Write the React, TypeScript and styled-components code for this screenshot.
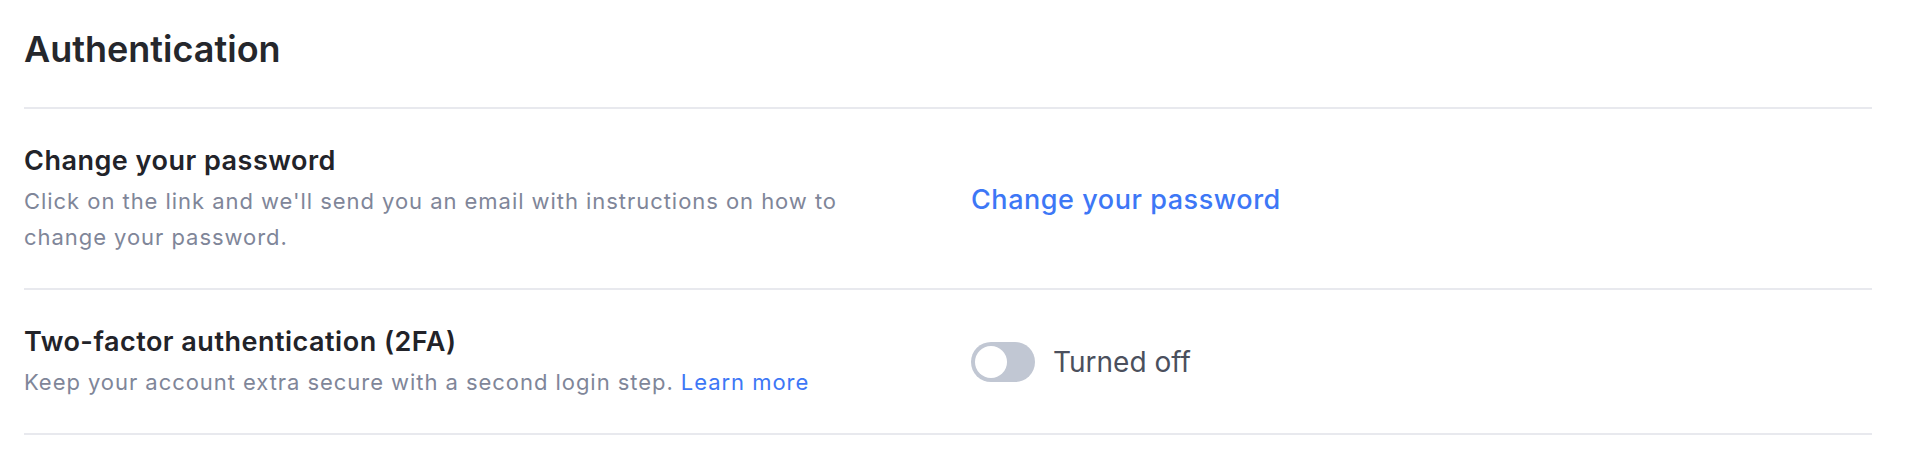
import React from 'react';
import styled, { createGlobalStyle } from 'styled-components';

const GlobalStyle = createGlobalStyle`
  body {
    margin: 0;
    background: #ffffff;
    font-family: Inter, "Noto Sans", sans-serif;
  }
`;

const Page = styled.section`
  padding: 0 36px 0 24px;
`;

const Title = styled.h1`
  margin: 0;
  padding: 27px 0 36px;
  font-size: 36px;
  line-height: 44px;
  font-weight: 600;
  color: #25272c;
  border-bottom: 2px solid #e8e9ee;
`;

const Row = styled.div`
  display: grid;
  grid-template-columns: 896px 1fr;
  column-gap: 51px;
  align-items: center;
  padding: 34px 0 33px;
  border-bottom: 2px solid #e8e9ee;
`;

const Info = styled.div`
  display: flex;
  flex-direction: column;
  gap: 4px;
`;

const Heading = styled.h2`
  margin: 0;
  font-size: 27px;
  line-height: 36px;
  font-weight: 600;
  letter-spacing: 0.5px;
  color: #222329;
`;

const Description = styled.p`
  margin: 0;
  max-width: 860px;
  font-size: 22px;
  line-height: 36px;
  letter-spacing: 0.95px;
  color: #7f8699;
`;

const Link = styled.a<{ $large?: boolean }>`
  color: #3d77f6;
  text-decoration: none;
  font-size: ${(p) => (p.$large ? '27px' : 'inherit')};
  font-weight: ${(p) => (p.$large ? 500 : 400)};
  letter-spacing: ${(p) => (p.$large ? '0.55px' : 'inherit')};
  cursor: pointer;
`;

const SwitchWrap = styled.label`
  display: flex;
  align-items: center;
  gap: 18px;
  cursor: pointer;
`;

const Track = styled.span<{ $on: boolean }>`
  position: relative;
  width: 64px;
  height: 40px;
  border-radius: 20px;
  background: ${(p) => (p.$on ? '#3d77f6' : '#c1c7d3')};
  flex-shrink: 0;
`;

const Knob = styled.span<{ $on: boolean }>`
  position: absolute;
  top: 4px;
  left: ${(p) => (p.$on ? '28px' : '4px')};
  width: 32px;
  height: 32px;
  border-radius: 50%;
  background: #ffffff;
`;

const SwitchLabel = styled.span`
  font-size: 28px;
  color: #4b505d;
`;

const App: React.FC = () => {
  const [twoFactor, setTwoFactor] = React.useState(false);

  return (
    <>
      <GlobalStyle />
      <Page>
        <Title>Authentication</Title>
        <Row>
          <Info>
            <Heading>Change your password</Heading>
            <Description>
              Click on the link and we'll send you an email with instructions on how to change your password.
            </Description>
          </Info>
          <div>
            <Link $large>Change your password</Link>
          </div>
        </Row>
        <Row>
          <Info>
            <Heading>Two-factor authentication (2FA)</Heading>
            <Description>
              Keep your account extra secure with a second login step. <Link>Learn more</Link>
            </Description>
          </Info>
          <SwitchWrap onClick={() => setTwoFactor(!twoFactor)}>
            <Track $on={twoFactor}>
              <Knob $on={twoFactor} />
            </Track>
            <SwitchLabel>{twoFactor ? 'Turned on' : 'Turned off'}</SwitchLabel>
          </SwitchWrap>
        </Row>
      </Page>
    </>
  );
};

export default App;
